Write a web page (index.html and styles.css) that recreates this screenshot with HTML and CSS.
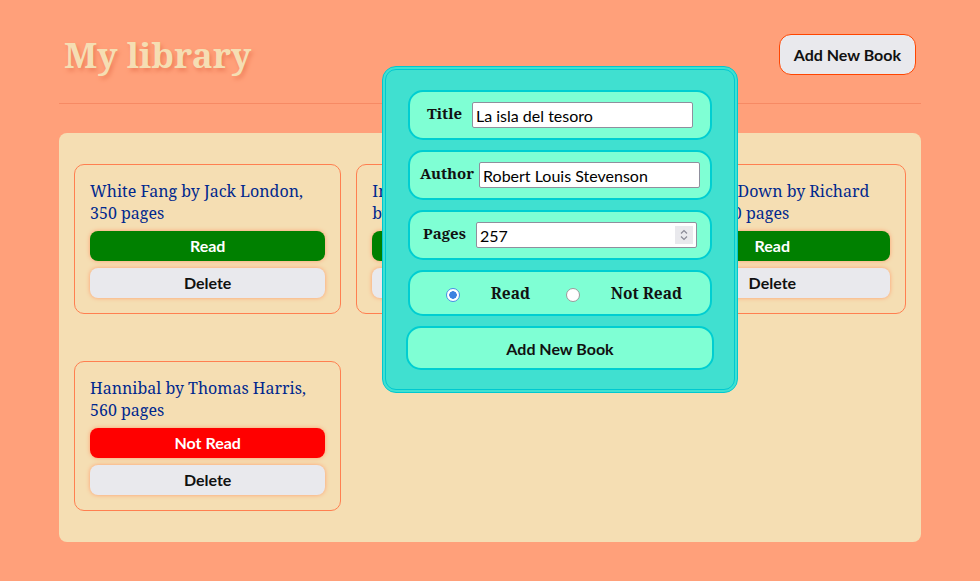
FILE: index.html
```html
<!DOCTYPE html>
<html lang="en">
<head>
<meta charset="utf-8">
<title>My library</title>
<link rel="stylesheet" href="styles.css">
</head>
<body>
<header class="top">
  <h1 class="brand">My library</h1>
  <button class="btn-open">Add New Book</button>
</header>
<main class="shelf">
  <div class="card">
    <p class="card-title">White Fang by Jack London, 350 pages</p>
    <button class="btn status read">Read</button>
    <button class="btn del">Delete</button>
  </div>
  <div class="card">
    <p class="card-title">Interview with the Vampire by&nbsp;Anne&nbsp;Rice, 342 pages</p>
    <button class="btn status read">Read</button>
    <button class="btn del">Delete</button>
  </div>
  <div class="card">
    <p class="card-title">Watership Down by Richard Adams, 480 pages</p>
    <button class="btn status read">Read</button>
    <button class="btn del">Delete</button>
  </div>
  <div class="card">
    <p class="card-title">Hannibal by Thomas Harris, 560 pages</p>
    <button class="btn status unread">Not Read</button>
    <button class="btn del">Delete</button>
  </div>
</main>

<form class="dialog">
  <div class="field">
    <label class="lbl" for="t">Title</label>
    <input class="inp" id="t" type="text" value="La isla del tesoro">
  </div>
  <div class="field field-author">
    <label class="lbl" for="a">Author</label>
    <input class="inp" id="a" type="text" value="Robert Louis Stevenson">
  </div>
  <div class="field">
    <label class="lbl" for="p">Pages</label>
    <div class="num">
      <input class="num-inp" id="p" type="text" value="257">
      <span class="spin">
        <svg width="10" height="14" viewBox="0 0 10 14"><path d="M2 5.5 L5 2.5 L8 5.5 M2 8.5 L5 11.5 L8 8.5" fill="none" stroke="#8a8a96" stroke-width="1.2"/></svg>
      </span>
    </div>
  </div>
  <div class="field radios">
    <input class="radio" type="radio" name="st" id="r1" checked>
    <label class="lbl big" for="r1">Read</label>
    <input class="radio" type="radio" name="st" id="r2">
    <label class="lbl big" for="r2">Not Read</label>
  </div>
  <button type="button" class="btn-submit">Add New Book</button>
</form>
</body>
</html>
```
FILE: styles.css
```css
* { box-sizing: border-box; }
html, body { margin: 0; }
body {
  background: #ffa07a;
  padding: 0 59px;
  min-height: 581px;
  font-family: "Noto Serif", "DejaVu Serif", serif;
  position: relative;
}
.top {
  height: 104px;
  padding: 6px 5px 0;
  display: flex;
  align-items: center;
  justify-content: space-between;
  border-bottom: 1px solid #f68a64;
}
.brand {
  margin: 0;
  font-size: 35px;
  font-weight: bold;
  color: #f5deb3;
  text-shadow: 2px 3px 4px #f0805c;
}
.btn-open {
  height: 41px;
  padding: 0 14px;
  border: 1px solid #ff4500;
  border-radius: 12px;
  background: #e9e9ed;
  color: #111;
  font: bold 16px "Lato", "Noto Sans", sans-serif;
}
.shelf {
  margin-top: 29px;
  background: #f5deb3;
  border-radius: 8px;
  padding: 31px 15px;
  display: grid;
  grid-template-columns: repeat(3, 1fr);
  gap: 47px 15px;
}
.card {
  border: 1px solid #ff7f50;
  border-radius: 10px;
  padding: 15px;
  display: flex;
  flex-direction: column;
  gap: 7px;
  height: 150px;
}
.card-title {
  margin: 0;
  font-size: 16px;
  line-height: 22px;
  color: #00288e;
}
.btn {
  height: 30px;
  border: none;
  border-radius: 8px;
  font: bold 16px "Lato", "Noto Sans", sans-serif;
  box-shadow: 0 0 4px #ff9f6f;
  padding-top: 0;
}
.read { background: #008000; color: #fff; }
.unread { background: #ff0000; color: #fff; }
.del { background: #e9e9ed; color: #111; }

.dialog {
  position: absolute;
  left: 382px;
  top: 66px;
  width: 356px;
  height: 327px;
  margin: 0;
  background: #40e0d0;
  border: 4px double #00c8d0;
  border-radius: 14px;
  padding: 20px 22px 19px;
  display: flex;
  flex-direction: column;
  gap: 10px;
}
.field {
  height: 50px;
  background: #7fffd4;
  border: 2px solid #00ced1;
  border-radius: 15px;
  display: flex;
  align-items: center;
  justify-content: center;
  gap: 10px;
}
.field-author { gap: 5px; }
.lbl {
  font-weight: bold;
  font-size: 15px;
  color: #111;
  margin-top: -4px;
}
.big { font-size: 15.5px; margin-top: 0; }
.inp, .num {
  width: 221px;
  height: 26px;
  border: 1px solid #8f8f9d;
  border-radius: 2px;
  background: #fff;
  font: 16px "Lato", "Noto Sans", sans-serif;
  color: #000;
  padding: 0 3px;
}
.num {
  display: flex;
  align-items: center;
  padding: 0 3px 0 0;
}
.num-inp {
  flex: 1;
  min-width: 0;
  border: none;
  outline: none;
  height: 24px;
  font: 16px "Lato", "Noto Sans", sans-serif;
  padding: 0 3px;
  background: transparent;
}
.spin {
  width: 18px;
  height: 18px;
  background: #e9e9ed;
  display: flex;
  align-items: center;
  justify-content: center;
}
.radios {
  height: 46px;
  justify-content: space-evenly;
  gap: 0;
}
.radio {
  appearance: none;
  -webkit-appearance: none;
  width: 14px;
  height: 14px;
  margin: 3px 3px 0 8px;
  border-radius: 50%;
  border: 1px solid #9a9a9a;
  background: #fff;
}
.radio:checked {
  border: 1.5px solid #4a8ee6;
  background: radial-gradient(circle, #3d82e0 0 3.5px, #fff 4px);
}
.btn-submit {
  height: 44px;
  margin: 0 -2px;
  background: #7fffd4;
  border: 2px solid #00ced1;
  border-radius: 15px;
  font: bold 16px "Lato", "Noto Sans", sans-serif;
  color: #111;
}
```
